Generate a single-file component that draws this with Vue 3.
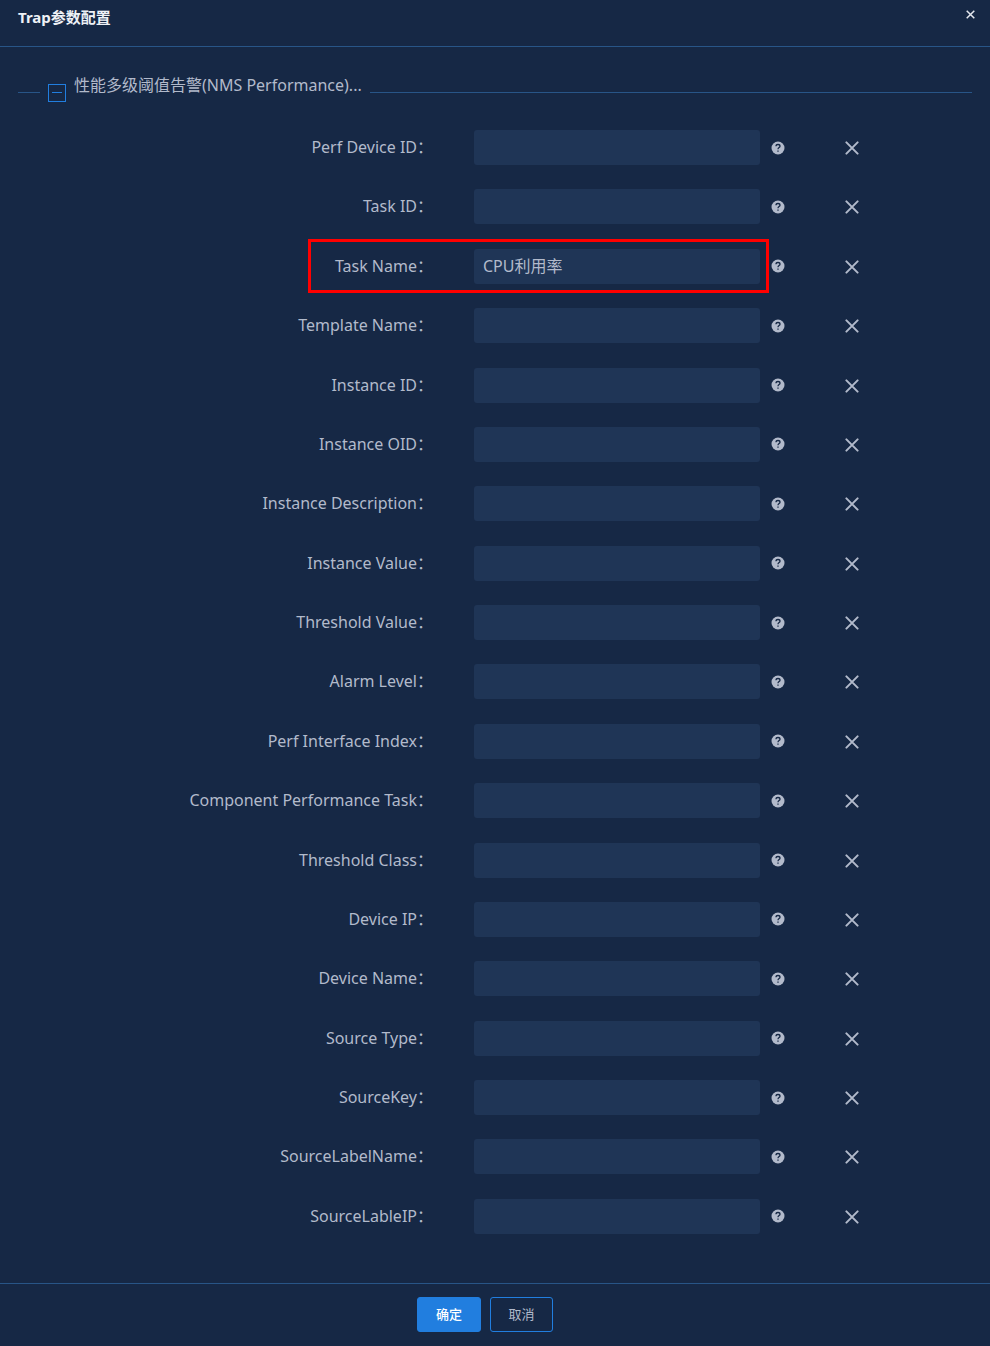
<script setup>
import { reactive } from 'vue'

const names = [
  'Perf Device ID', 'Task ID', 'Task Name', 'Template Name', 'Instance ID',
  'Instance OID', 'Instance Description', 'Instance Value', 'Threshold Value',
  'Alarm Level', 'Perf Interface Index', 'Component Performance Task',
  'Threshold Class', 'Device IP', 'Device Name', 'Source Type', 'SourceKey',
  'SourceLabelName', 'SourceLableIP',
]

const fields = reactive(
  names.map((name, i) => ({
    id: `param-${i}`,
    name,
    value: name === 'Task Name' ? 'CPU利用率' : '',
    marked: name === 'Task Name',
  })),
)
</script>

<template>
  <form class="dialog" @submit.prevent>
    <header class="header">
      <h1 class="title">Trap参数配置</h1>
      <button type="button" class="icon-button close" aria-label="关闭">
        <svg width="9" height="9" viewBox="0 0 9 9"><path d="M.7.7l7.6 7.6M8.3.7L.7 8.3" /></svg>
      </button>
    </header>

    <main class="body">
      <div class="section">
        <span class="rule rule-start"></span>
        <button type="button" class="toggle" aria-label="折叠">
          <svg width="16" height="16" viewBox="0 0 16 16"><path d="M3 7.5h10" /></svg>
        </button>
        <h2 class="section-title">性能多级阈值告警(NMS Performance)...</h2>
        <span class="rule rule-end"></span>
      </div>

      <div class="fields">
        <div v-for="field in fields" :key="field.id" class="row">
          <label class="label" :for="field.id">{{ field.name }}：</label>
          <input :id="field.id" v-model="field.value" class="input" type="text" />
          <div class="actions">
            <button type="button" class="icon-button" aria-label="帮助">
              <svg class="help" width="14" height="14" viewBox="0 0 14 14">
                <circle cx="7" cy="7" r="6.5" />
                <path d="M5 5.3C5 4.1 5.8 3.5 7 3.5s2 .7 2 1.7C9 6.5 7 6.6 7 8.2" />
                <path d="M7 9.5v1.3" />
              </svg>
            </button>
            <button type="button" class="icon-button remove" aria-label="删除">
              <svg width="14" height="14" viewBox="0 0 14 14"><path d="M1.4 1.4l11.2 11.2M12.6 1.4L1.4 12.6" /></svg>
            </button>
          </div>
          <span v-if="field.marked" class="marker"></span>
        </div>
      </div>
    </main>

    <footer class="footer">
      <button type="submit" class="button primary">确定</button>
      <button type="button" class="button">取消</button>
    </footer>
  </form>
</template>

<style>
body {
  background: #162845;
}
</style>

<style scoped>
.dialog,
.dialog * {
  box-sizing: border-box;
}

.dialog {
  display: flex;
  flex-direction: column;
  min-height: 100vh;
  background: #162845;
  color: #b2bacb;
  font: 16px/20px "Noto Sans", "Noto Sans CJK SC", sans-serif;
}

.dialog button,
.dialog input {
  font-family: inherit;
  color: inherit;
}

.header {
  display: flex;
  justify-content: space-between;
  align-items: flex-start;
  height: 47px;
  padding: 7px 15px 0 18px;
  border-bottom: 1px solid #285587;
}

.title {
  margin: 0;
  font-size: 15px;
  line-height: 20px;
  font-weight: 700;
  color: #eef1f6;
}

.icon-button {
  display: flex;
  padding: 0;
  border: 0;
  background: none;
  cursor: pointer;
}

.icon-button svg,
.toggle svg {
  display: block;
  fill: none;
  stroke: currentColor;
}

.close {
  padding-top: 3px;
}

.dialog .close {
  color: #e4e8ef;
}

.close svg {
  stroke-width: 1.5;
}

.body {
  flex: 1;
  display: flex;
  flex-direction: column;
  padding: 28px 18px 49px;
}

.section {
  display: flex;
  align-items: flex-start;
  height: 55px;
}

.rule {
  height: 1px;
  margin-top: 17px;
  background: #285587;
}

.rule-start {
  width: 22px;
}

.rule-end {
  flex: 1;
}

.toggle {
  width: 18px;
  height: 18px;
  margin: 9px 8px 0;
  padding: 0;
  border: 1px solid #217edf;
  background: none;
}

.dialog .toggle {
  color: #217edf;
}

.section-title {
  margin: 0 8px 0 0;
  font-size: 16px;
  line-height: 20px;
  font-weight: 400;
}

.fields {
  flex: 1;
  display: flex;
  flex-direction: column;
  justify-content: space-between;
}

.row {
  position: relative;
  display: grid;
  grid-template-columns: 456fr 286fr 212fr;
  align-items: center;
}

.label {
  padding: 0 41px 1px 0;
  text-align: right;
}

.input {
  width: 100%;
  height: 35px;
  padding: 0 9px 2px;
  border: 0;
  border-radius: 3px;
  background: #1f3556;
  font-size: 16px;
  outline: none;
}

.actions {
  display: flex;
  align-items: center;
  gap: 60px;
  padding-left: 11px;
}

.help circle {
  fill: #b2bacb;
  stroke: none;
}

.help path {
  stroke: #162845;
  stroke-width: 1.3;
}

.remove {
  padding-top: 1px;
}

.remove svg {
  stroke-width: 2;
  stroke-linecap: round;
}

.marker {
  position: absolute;
  grid-column: 1 / 3;
  top: -10px;
  right: -9px;
  bottom: -9px;
  width: 461px;
  border: 3px solid #ff0000;
  pointer-events: none;
}

.footer {
  display: flex;
  justify-content: center;
  gap: 9px;
  padding: 13px 20px 14px 0;
  border-top: 1px solid #285587;
}

.button {
  min-width: 63px;
  height: 35px;
  padding: 0 17px 1px;
  border: 1px solid #217edf;
  border-radius: 3px;
  background: none;
  font-size: 13px;
  line-height: 20px;
  cursor: pointer;
}

.dialog .primary {
  min-width: 64px;
  background: #217edf;
  color: #ffffff;
  font-weight: 500;
}
</style>
